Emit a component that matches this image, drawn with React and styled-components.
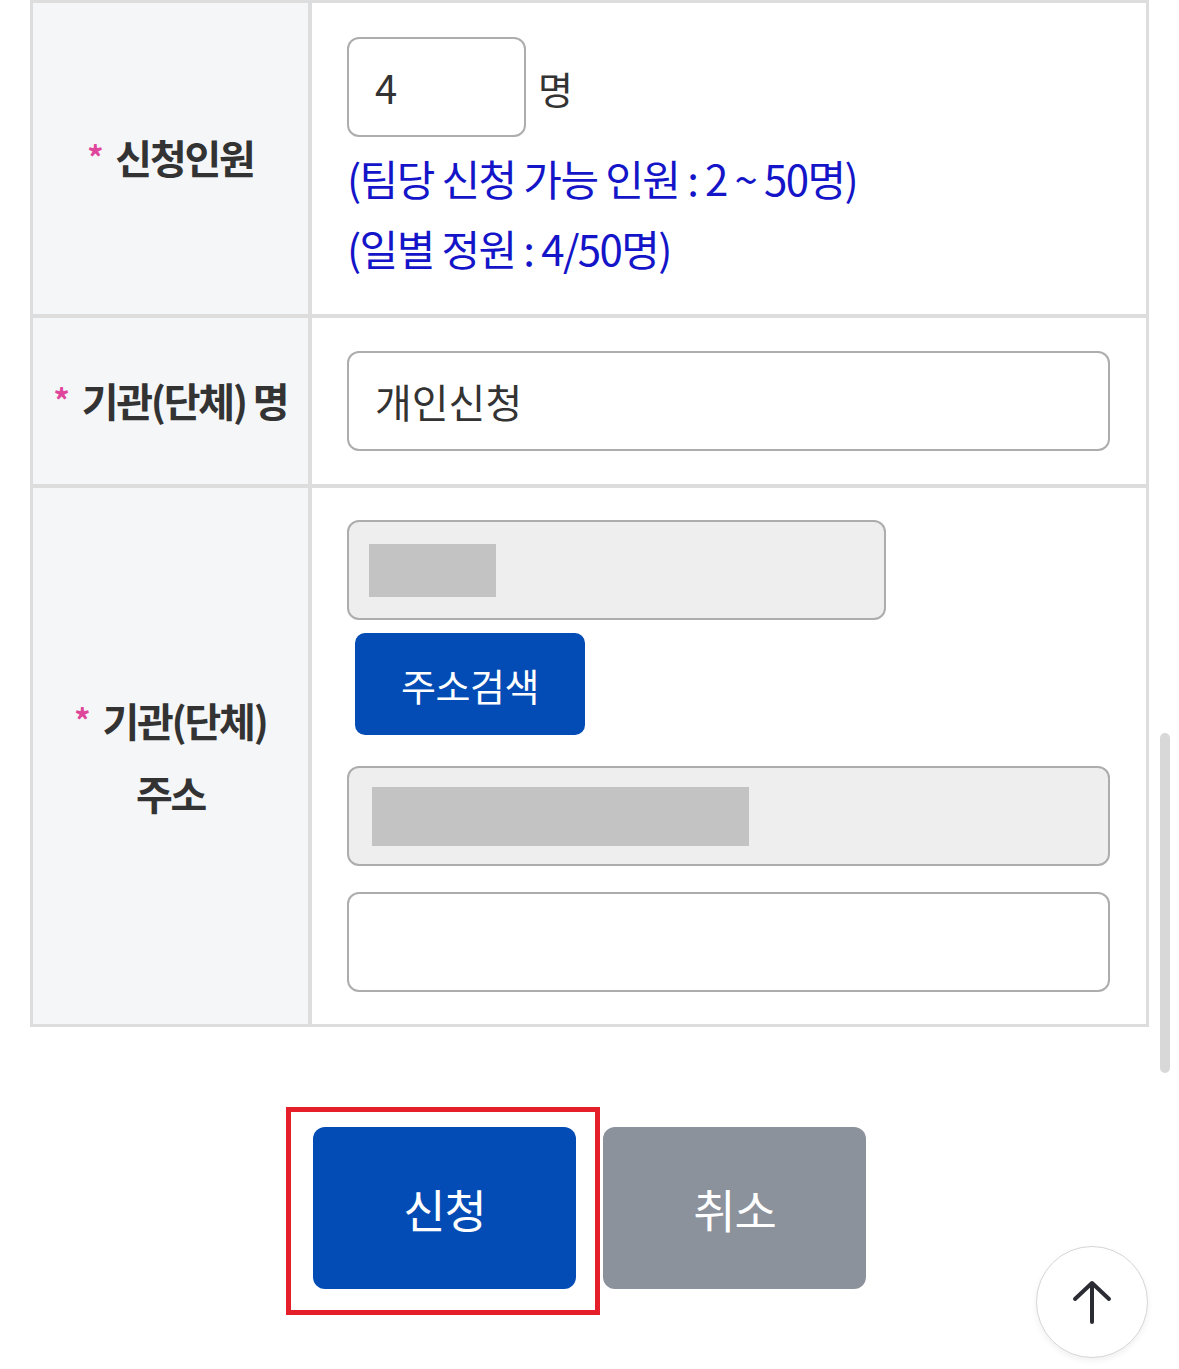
import React from "react";
import styled, { createGlobalStyle } from "styled-components";

const Global = createGlobalStyle`
  html, body { margin: 0; padding: 0; background: #fff; }
  body { font-family: "Noto Sans CJK KR", "Noto Sans", sans-serif; color: #333; }
  * { box-sizing: border-box; }
`;

const Page = styled.div`
  position: relative;
  width: 1179px;
  height: 1369px;
  overflow: hidden;
  padding: 0 30px;
`;

const Table = styled.div`
  display: grid;
  grid-template-columns: 275px 1fr;
  border: 3px solid #dddddd;
  width: 1119px;
  background: #dddddd;
  gap: 4px 4px;
`;

const Label = styled.div`
  background: #f5f6f8;
  display: flex;
  align-items: center;
  justify-content: center;
  text-align: center;
  font-weight: 700;
  font-size: 40px;
  line-height: 70px;
  letter-spacing: -2.2px;
  color: #333;
`;

const Star = styled.span`
  color: #e0459c;
  font-size: 32px;
  font-weight: 700;
  margin-right: 14px;
  position: relative;
  top: -4px;
`;

const Cell = styled.div`
  background: #fff;
  padding: ${(p) => p.$pad || "33px 36px 33px 35px"};
  display: flex;
  flex-direction: column;
  align-items: flex-start;
`;

const InlineRow = styled.div`
  display: flex;
  align-items: center;
  gap: 12px;
  font-size: 38px;
  color: #333;
`;

const Input = styled.div`
  width: ${(p) => p.$w || "100%"};
  height: 100px;
  border: 2px solid #adadad;
  border-radius: 12px;
  background: ${(p) => (p.$disabled ? "#eeeeee" : "#fff")};
  display: flex;
  align-items: center;
  padding-left: ${(p) => p.$pl || "26px"};
  font-size: 40px;
  color: #333;
  margin-top: ${(p) => p.$mt || "0"};
`;

const Redact = styled.div`
  width: ${(p) => p.$w};
  height: ${(p) => p.$h};
  background: #c3c3c3;
`;

const Note = styled.div`
  color: #1414c8;
  font-size: 42px;
  line-height: 70px;
  letter-spacing: -1.6px;
  margin-top: ${(p) => p.$mt || "0"};
`;

const SearchButton = styled.button`
  margin: 13px 0 0 8px;
  width: 230px;
  height: 102px;
  border: none;
  border-radius: 10px;
  background: #034cb5;
  color: #fff;
  font-family: inherit;
  font-size: 38px;
  letter-spacing: -0.5px;
`;

const Actions = styled.div`
  display: flex;
  justify-content: center;
  gap: 27px;
  margin-top: 100px;
`;

const Highlight = styled.div`
  position: relative;
  &::after {
    content: "";
    position: absolute;
    left: -27px;
    top: -20px;
    right: -24px;
    bottom: -26px;
    border: 5px solid #e51f29;
    pointer-events: none;
  }
`;

const ActionButton = styled.button`
  width: 263px;
  height: 162px;
  border: none;
  border-radius: 12px;
  background: ${(p) => (p.$secondary ? "#8c929b" : "#034cb5")};
  color: #fff;
  font-family: inherit;
  font-size: 46px;
  letter-spacing: -1px;
`;

const Scrollbar = styled.div`
  position: absolute;
  left: 1160px;
  top: 733px;
  width: 10px;
  height: 340px;
  border-radius: 5px;
  background: #d8d8d8;
`;

const TopButton = styled.button`
  position: absolute;
  left: 1036px;
  top: 1246px;
  width: 112px;
  height: 112px;
  border-radius: 50%;
  border: 1.5px solid #d6d6d6;
  background: #fff;
  box-shadow: 0 3px 6px rgba(0, 0, 0, 0.06);
  display: flex;
  align-items: center;
  justify-content: center;
  padding: 0;
`;

export default function App() {
  return (
    <>
      <Global />
      <Page>
        <Table>
          <Label>
            <span>
              <Star>*</Star>신청인원
            </span>
          </Label>
          <Cell $pad="34px 36px 31px 35px">
            <InlineRow>
              <Input $w="179px">4</Input>
              <span>명</span>
            </InlineRow>
            <Note $mt="6px">(팀당 신청 가능 인원 : 2 ~ 50명)</Note>
            <Note>(일별 정원 : 4/50명)</Note>
          </Cell>

          <Label>
            <span>
              <Star>*</Star>기관(단체) 명
            </span>
          </Label>
          <Cell>
            <Input>개인신청</Input>
          </Cell>

          <Label>
            <span>
              <Star>*</Star>기관(단체)
              <br />
              주소
            </span>
          </Label>
          <Cell $pad="32px 36px 32px 35px">
            <Input $w="539px" $disabled $pl="20px">
              <Redact $w="127px" $h="53px" />
            </Input>
            <SearchButton>주소검색</SearchButton>
            <Input $disabled $pl="23px" $mt="31px">
              <Redact $w="377px" $h="59px" />
            </Input>
            <Input $mt="26px" />
          </Cell>
        </Table>

        <Actions>
          <Highlight>
            <ActionButton>신청</ActionButton>
          </Highlight>
          <ActionButton $secondary>취소</ActionButton>
        </Actions>

        <Scrollbar />
        <TopButton aria-label="맨 위로">
          <svg width="44" height="48" viewBox="0 0 44 48" fill="none">
            <path
              d="M22 44V6M5 21L22 5L39 21"
              stroke="#2a2b33"
              strokeWidth="4"
              strokeLinecap="round"
              strokeLinejoin="round"
            />
          </svg>
        </TopButton>
      </Page>
    </>
  );
}
